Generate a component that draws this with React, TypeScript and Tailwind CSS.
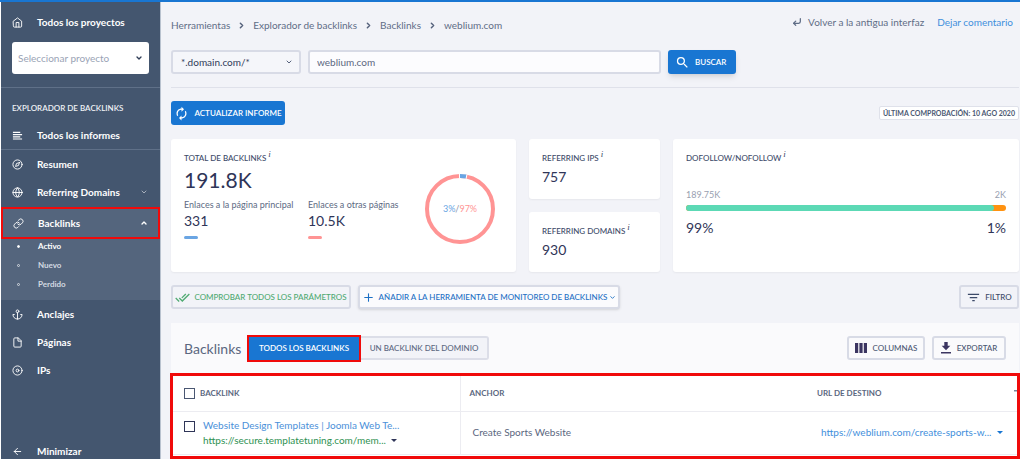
import { useState } from 'react'
import type { ReactNode } from 'react'
import clsx from 'clsx'
import type { IconType } from 'react-icons'
import {
  FiAnchor,
  FiArrowLeft,
  FiChevronDown,
  FiChevronRight,
  FiChevronUp,
  FiCompass,
  FiCornerDownLeft,
  FiDisc,
  FiFile,
  FiGlobe,
  FiHome,
  FiLink,
  FiPlus,
} from 'react-icons/fi'
import { MdAutorenew, MdDoneAll, MdFilterList, MdSearch } from 'react-icons/md'

const crumbs = ['Herramientas', 'Explorador de backlinks', 'Backlinks']

const subItems = ['Activo', 'Nuevo', 'Perdido']

function ReportsIcon({ className }: { className?: string }) {
  return (
    <svg viewBox="0 0 12 12" className={className} fill="currentColor" aria-hidden>
      <path d="M1 2h8v1.4H1zM1 4.4h10v1.4H1zM1 6.8h8v1.4H1zM1 9.2h10v1.2H1z" />
    </svg>
  )
}

function ColumnsIcon() {
  return (
    <svg viewBox="0 0 12 10" className="h-[10px] w-3 shrink-0" fill="#3b3561" aria-hidden>
      <path d="M0 0h3.2v10H0zM4.4 0h3.2v10H4.4zM8.8 0H12v10H8.8z" />
    </svg>
  )
}

function ExportIcon() {
  return (
    <svg viewBox="0 0 10 12" className="h-3 w-[10px] shrink-0" fill="#3b3561" aria-hidden>
      <path d="M3.3 0h3.4v3.8h2.6L5 8.2.7 3.8h2.6zM0 10h10v1.5H0z" />
    </svg>
  )
}

function NavItem({
  icon: Icon,
  children,
}: {
  icon: IconType | typeof ReportsIcon
  children: ReactNode
}) {
  return (
    <a href="#" className="flex h-7 items-center pr-3 pl-[11px] text-white">
      <Icon className="mr-[14px] size-[11px] shrink-0" />
      <span>{children}</span>
    </a>
  )
}

function Label({ children }: { children: ReactNode }) {
  return (
    <h2 className="text-[8px] leading-3 font-medium whitespace-nowrap text-[#3c4a68]">
      {children} <sup className="font-['Liberation_Serif',serif] text-[9px] italic">i</sup>
    </h2>
  )
}

function Card({ className, children }: { className?: string; children: ReactNode }) {
  return (
    <section className={clsx('rounded-[3px] bg-white px-[13px] pt-[13px] shadow-xs', className)}>
      {children}
    </section>
  )
}

function Donut() {
  return (
    <div className="relative flex size-[72px] items-center justify-center">
      <svg viewBox="0 0 72 72" className="absolute inset-0" fill="none" strokeWidth="4" aria-hidden>
        <circle cx="36" cy="36" r="33" stroke="#ff9494" />
        <path d="M35 3a33 33 0 0 1 8 .7" stroke="#fff" />
        <path d="M36 3a33 33 0 0 1 6 .5" stroke="#6aa5e3" />
      </svg>
      <p className="text-[9px] text-[#8a93a8]">
        <span className="text-[#6aa5e3]">3%</span>/<span className="text-[#ff9494]">97%</span>
      </p>
    </div>
  )
}

function Sidebar() {
  const [open, setOpen] = useState(true)
  const [active, setActive] = useState('Activo')

  return (
    <aside className="flex w-40 shrink-0 flex-col border-r border-[#b9c2cf] bg-[#44566f] text-[10px] leading-4 font-bold text-white">
      <div className="pt-[6px]">
        <NavItem icon={FiHome}>Todos los proyectos</NavItem>
      </div>
      <div className="relative mx-[11px] mt-[6px]">
        <select
          aria-label="Proyecto"
          className="h-8 w-full appearance-none rounded-[3px] bg-white pl-[6px] font-normal text-[#9aa3b5]"
        >
          <option>Seleccionar proyecto</option>
        </select>
        <FiChevronDown
          strokeWidth={4}
          className="pointer-events-none absolute top-3 right-[6px] size-2 text-[#2f3d56]"
        />
      </div>

      <h2 className="mt-[13px] border-t border-[#5f7088] pt-3 pl-[11px] text-[8px] font-semibold whitespace-nowrap text-[#eef1f5]">
        EXPLORADOR DE BACKLINKS
      </h2>
      <nav className="flex grow flex-col">
        <div className="mt-[5px] border-b border-[#5f7088]">
          <NavItem icon={ReportsIcon}>Todos los informes</NavItem>
        </div>
        <NavItem icon={FiCompass}>Resumen</NavItem>
        <a href="#" className="mb-[3px] flex h-7 items-center pr-3 pl-[11px]">
          <FiGlobe className="mr-[14px] size-[11px] shrink-0" />
          <span className="grow">Referring Domains</span>
          <FiChevronDown className="size-2 opacity-80" />
        </a>
        <button
          type="button"
          aria-expanded={open}
          onClick={() => setOpen(!open)}
          className="relative z-10 mx-[2px] flex h-7 items-center bg-[#54657d] px-[10px] text-left font-bold outline-2 outline-[#f00a0a]"
        >
          <FiLink className="mr-[14px] size-[11px] shrink-0" />
          <span className="grow">Backlinks</span>
          <FiChevronUp className="size-2" strokeWidth={4} />
        </button>
        {open && (
          <ul className="h-[63px] bg-[#54657d] text-[8px] leading-[19px]">
            {subItems.map((item) => (
              <li key={item}>
                <button
                  type="button"
                  onClick={() => setActive(item)}
                  className={clsx(
                    'flex w-full items-center pl-4 font-bold',
                    item === active ? 'text-white' : 'text-[#d3d9e1]',
                  )}
                >
                  <span
                    className={clsx(
                      'mr-[18px] size-[3px] rounded-full border border-current',
                      item === active && 'bg-current',
                    )}
                  />
                  {item}
                </button>
              </li>
            ))}
          </ul>
        )}
        <NavItem icon={FiAnchor}>Anclajes</NavItem>
        <NavItem icon={FiFile}>Páginas</NavItem>
        <NavItem icon={FiDisc}>IPs</NavItem>
        <button type="button" className="mt-auto flex h-4 items-center pl-[11px] font-bold">
          <FiArrowLeft className="mr-[14px] size-[11px] shrink-0" />
          Minimizar
        </button>
      </nav>
    </aside>
  )
}

function Header() {
  const [domain, setDomain] = useState('weblium.com')

  return (
    <header className="border-b border-[#dfe1ea]">
      <div className="flex items-start justify-between text-[10px] leading-4 text-[#5f6d86]">
        <ol className="flex items-center pt-[15px]">
          {crumbs.map((crumb) => (
            <li key={crumb} className="flex items-center">
              <a href="#">{crumb}</a>
              <FiChevronRight className="mx-[7px] size-[9px] text-[#56627c]" strokeWidth={4} />
            </li>
          ))}
          <li>weblium.com</li>
        </ol>
        <div className="flex gap-[13px] pt-3 pr-[6px]">
          <a href="#" className="flex items-center">
            <FiCornerDownLeft className="mr-[6px] size-[10px]" strokeWidth={3} />
            Volver a la antigua interfaz
          </a>
          <a href="#" className="text-[#3f8fdc]">
            Dejar comentario
          </a>
        </div>
      </div>

      <form
        className="mt-[17px] mb-[13px] flex gap-[7px] text-[10px]"
        onSubmit={(e) => e.preventDefault()}
      >
        <div className="relative w-[130px]">
          <select
            aria-label="Tipo de búsqueda"
            className="h-6 w-full appearance-none rounded-[3px] border-2 border-[#d8dbe6] bg-[#f5f6fa] pl-2 text-[#2f3b59]"
          >
            <option>*.domain.com/*</option>
          </select>
          <FiChevronDown
            strokeWidth={3}
            className="pointer-events-none absolute top-2 right-2 size-2 text-[#56627c]"
          />
        </div>
        <input
          aria-label="Dominio"
          value={domain}
          onChange={(e) => setDomain(e.target.value)}
          className="h-6 w-[353px] rounded-[3px] border-2 border-[#d8dbe6] bg-[#fcfcfe] px-[7px] text-[#5b6780]"
        />
        <button
          type="submit"
          className="flex h-6 w-[68px] items-center gap-[5px] rounded-[3px] bg-[#1976d2] pl-[7px] text-[8px] font-semibold text-white shadow-md shadow-black/10"
        >
          <MdSearch className="size-[15px] shrink-0" />
          BUSCAR
        </button>
      </form>
    </header>
  )
}

function Stats() {
  return (
    <div className="mt-[14px] grid grid-cols-[345fr_131fr_346fr] gap-[13px]">
      <Card className="row-span-2">
        <Label>TOTAL DE BACKLINKS</Label>
        <div className="flex">
          <div className="w-[124px]">
            <p className="mt-[2px] text-[21px] leading-7 text-[#2f3558]">191.8K</p>
            <p className="mt-[5px] text-[9px] leading-3 whitespace-nowrap text-[#5d6a83]">
              Enlaces a la página principal
            </p>
            <p className="text-[14px] leading-5 text-[#2f3558]">331</p>
            <span className="mt-[5px] block h-[3px] w-[14px] rounded-full bg-[#6aa5e3]" />
          </div>
          <div className="mt-[35px] w-[116px]">
            <p className="text-[9px] leading-3 whitespace-nowrap text-[#5d6a83]">
              Enlaces a otras páginas
            </p>
            <p className="text-[14px] leading-5 text-[#2f3558]">10.5K</p>
            <span className="mt-[5px] block h-[3px] w-[14px] rounded-full bg-[#ff9494]" />
          </div>
          <div className="mt-[9px]">
            <Donut />
          </div>
        </div>
      </Card>
      <Card className="h-[60px]">
        <Label>REFERRING IPS</Label>
        <p className="mt-[3px] text-[14px] leading-5 text-[#2f3558]">757</p>
      </Card>
      <Card className="row-span-2">
        <Label>DOFOLLOW/NOFOLLOW</Label>
        <div className="mt-[25px] flex justify-between text-[9px] leading-3 text-[#98a0b0]">
          <span>189.75K</span>
          <span>2K</span>
        </div>
        <div className="mt-1 flex h-[6px] overflow-hidden rounded-full bg-[#ff9210]">
          <div className="mr-3 grow rounded-r-full bg-[#5cd9b5]" />
        </div>
        <div className="mt-[7px] flex justify-between text-[14px] leading-5 text-[#2f3558]">
          <span>99%</span>
          <span>1%</span>
        </div>
      </Card>
      <Card className="h-[60px]">
        <Label>REFERRING DOMAINS</Label>
        <p className="mt-[3px] text-[14px] leading-5 text-[#2f3558]">930</p>
      </Card>
    </div>
  )
}

function BacklinksPanel() {
  const [single, setSingle] = useState(false)

  return (
    <section className="mt-[14px] flex grow flex-col bg-[#fafafc]">
      <div className="flex h-[50px] items-center px-[13px] text-[8px] font-medium">
        <h2 className="w-[63px] text-[14px] font-normal text-[#5b6780]">Backlinks</h2>
        <button
          type="button"
          aria-pressed={!single}
          onClick={() => setSingle(false)}
          className="h-[27px] w-[114px] border-2 border-[#f00a0a] bg-[#1976d2] font-semibold text-white"
        >
          TODOS LOS BACKLINKS
        </button>
        <button
          type="button"
          aria-pressed={single}
          onClick={() => setSingle(true)}
          className="h-6 w-[128px] rounded-r-[3px] border-2 border-l-0 border-[#dcdee8] bg-[#f2f3f8] text-[#5b6780]"
        >
          UN BACKLINK DEL DOMINIO
        </button>
        <button
          type="button"
          className="ml-auto flex h-6 w-[78px] items-center justify-center gap-[6px] rounded-[3px] border-2 border-[#d8dbe6] text-[#4a5772]"
        >
          <ColumnsIcon />
          COLUMNAS
        </button>
        <button
          type="button"
          className="ml-[7px] flex h-6 w-[74px] items-center justify-center gap-[6px] rounded-[3px] border-2 border-[#d8dbe6] text-[#4a5772]"
        >
          <ExportIcon />
          EXPORTAR
        </button>
      </div>

      <div className="-mx-px grow border-[3px] border-[#f00a0a] bg-white">
        <table className="w-full table-fixed border-collapse text-left text-[10px]">
          <thead>
            <tr className="h-[35px] border-b border-[#ececf1] text-[8px] text-[#5b6780]">
              <th className="w-[287px] border-r border-[#ececf1] pl-[11px]">
                <label className="flex items-center gap-[5px]">
                  <input
                    type="checkbox"
                    className="size-[11px] appearance-none border border-[#4a5772] bg-white"
                  />
                  BACKLINK
                </label>
              </th>
              <th className="pl-[9px]">ANCHOR</th>
              <th className="w-[197px]">URL DE DESTINO</th>
              <th className="w-[3px]" aria-label="Ordenar">
                <svg viewBox="0 0 3 6" className="h-[6px] w-[3px]" fill="#7b869b" aria-hidden>
                  <path d="M0 0h3v1.5H0z" />
                </svg>
              </th>
            </tr>
          </thead>
          <tbody>
            <tr className="h-[43px] border-b border-[#ececf1]">
              <td className="border-r border-[#ececf1] pl-[11px]">
                <div className="flex items-start gap-2">
                  <input
                    type="checkbox"
                    aria-label="Website Design Templates"
                    className="mt-[3px] size-[11px] shrink-0 appearance-none border border-[#2f3558] bg-white"
                  />
                  <div className="leading-[15px] whitespace-nowrap">
                    <a href="#" className="block text-[#4a90d9]">
                      Website Design Templates | Joomla Web Te...
                    </a>
                    <a href="#" className="flex items-center text-[#2e9152]">
                      https://secure.templatetuning.com/mem...
                      <span className="ml-[5px] border-x-[3px] border-t-[3px] border-x-transparent border-t-[#2f3558]" />
                    </a>
                  </div>
                </div>
              </td>
              <td className="pl-3 text-[#5b6780]">Create Sports Website</td>
              <td className="pl-1 whitespace-nowrap">
                <a href="#" className="flex items-center text-[#3f8fdc]">
                  https://weblium.com/create-sports-w...
                  <span className="ml-[6px] border-x-[3px] border-t-[3px] border-x-transparent border-t-[#1976d2]" />
                </a>
              </td>
              <td />
            </tr>
          </tbody>
        </table>
      </div>
    </section>
  )
}

export default function App() {
  return (
    <div className="flex min-h-svh flex-col bg-white pr-1 pb-[3px] font-[Lato,'Open_Sans',sans-serif]">
      <div className="h-[2px] bg-[#1976d2]" />
      <div className="flex grow pl-px">
        <Sidebar />
        <main className="flex min-w-0 grow flex-col bg-[#f2f3f8] pr-px pl-[10px]">
          <Header />
          <div className="mt-[13px] flex items-center justify-between">
            <button
              type="button"
              className="flex h-6 w-[114px] items-center justify-center gap-[5px] rounded-[3px] bg-[#1976d2] text-[8px] font-semibold whitespace-nowrap text-white"
            >
              <MdAutorenew className="size-[15px] shrink-0" />
              ACTUALIZAR INFORME
            </button>
            <p className="rounded-[2px] border border-[#dfe1ea] bg-white px-[3px] text-[7px] leading-3 font-bold text-[#4a5772]">
              ÚLTIMA COMPROBACIÓN: 10 AGO 2020
            </p>
          </div>
          <Stats />
          <div className="mt-[13px] flex text-[8px] font-medium whitespace-nowrap">
            <button
              type="button"
              className="flex h-6 w-[180px] items-center justify-center gap-1 rounded-[3px] border-2 border-[#d8dbe6] text-[#4faa72]"
            >
              <MdDoneAll className="size-[15px] shrink-0" />
              COMPROBAR TODOS LOS PARÁMETROS
            </button>
            <button
              type="button"
              className="ml-[7px] flex h-6 w-[262px] items-center justify-center rounded-[3px] border-2 border-[#d8dbe6] bg-[#fbfbfd] text-[#1b6fc4] shadow-sm"
            >
              <FiPlus className="mr-1 size-[13px] shrink-0" />
              AÑADIR A LA HERRAMIENTA DE MONITOREO DE BACKLINKS
              <FiChevronDown className="ml-[2px] size-[7px] shrink-0" strokeWidth={3} />
            </button>
            <button
              type="button"
              className="ml-auto flex h-6 w-[60px] items-center justify-center gap-1 rounded-[3px] border-2 border-[#d8dbe6] text-[#3c4a68]"
            >
              <MdFilterList className="size-[15px] shrink-0" />
              FILTRO
            </button>
          </div>
          <BacklinksPanel />
        </main>
      </div>
    </div>
  )
}
